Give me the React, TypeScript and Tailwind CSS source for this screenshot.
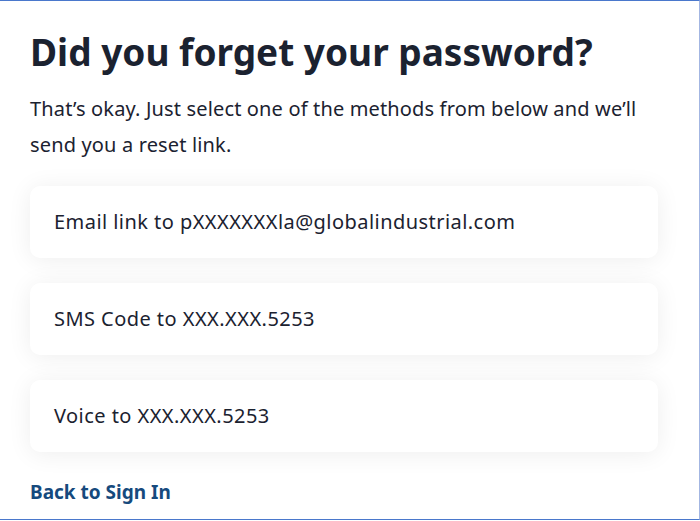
export default function App() {
  const methods = [
    "Email link to pXXXXXXXla@globalindustrial.com",
    "SMS Code to XXX.XXX.5253",
    "Voice to XXX.XXX.5253",
  ];

  return (
    <div
      className="h-[520px] w-[700px] bg-white border-t border-t-[#4a78cc] border-r border-r-[#a3b6e2] border-b border-b-[#4a78cc] text-[#1b2230] overflow-hidden"
      style={{ fontFamily: '"Noto Sans", sans-serif' }}
    >
      <div className="pl-[30px] pr-[41px] pt-[29px]">
        <h1 className="text-[37px] leading-[44px] font-bold">
          Did you forget your password?
        </h1>

        <p className="mt-[17px] text-[20px] leading-[36px] tracking-[0.15px]">
          That’s okay. Just select one of the methods from below and we’ll send
          you a reset link.
        </p>

        <div className="mt-[23px] flex flex-col gap-[25px]">
          {methods.map((m) => (
            <button
              key={m}
              className="h-[72px] w-full text-left rounded-[10px] bg-white pl-[24px] text-[20px] tracking-[0.45px] shadow-[0_2px_24px_rgba(0,0,0,0.07)]"
            >
              {m}
            </button>
          ))}
        </div>

        <a
          href="#"
          className="mt-[26px] block text-[19px] leading-[28px] font-bold text-[#164a7d]"
        >
          Back to Sign In
        </a>
      </div>
    </div>
  );
}
